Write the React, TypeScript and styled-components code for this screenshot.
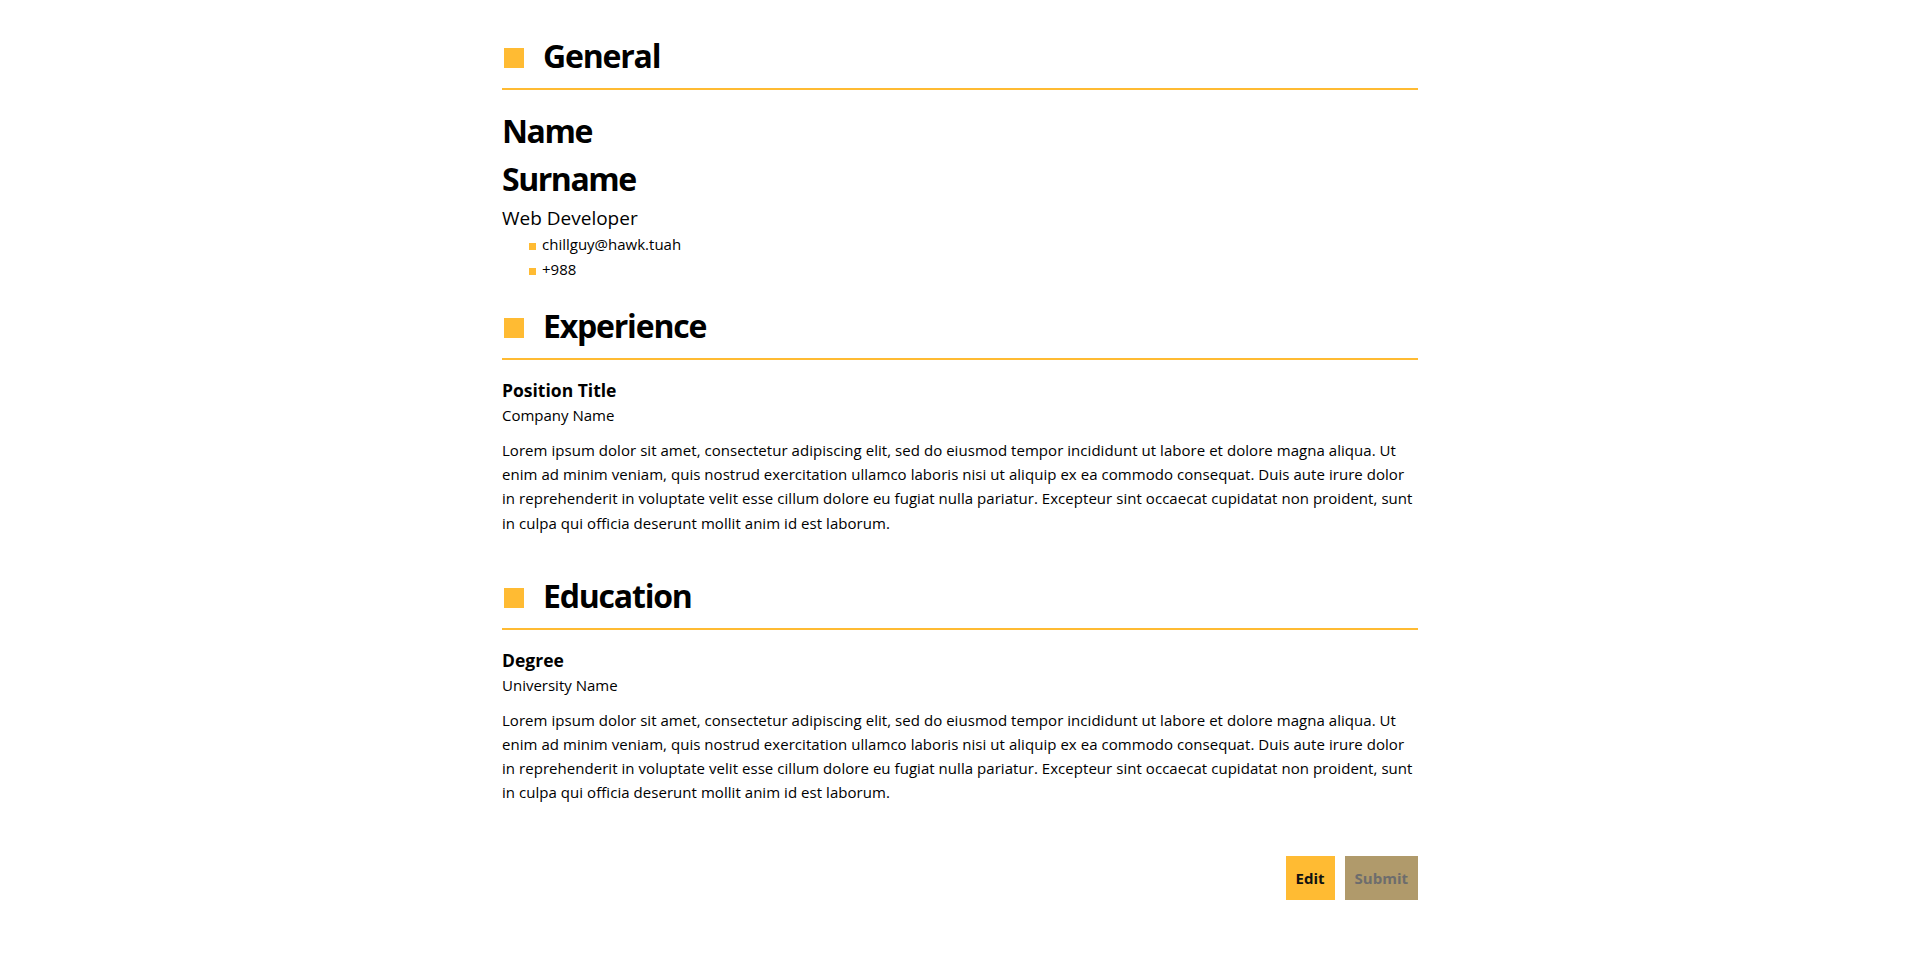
import React from "react";
import styled, { createGlobalStyle } from "styled-components";

const ACCENT = "#FFBB33";

const GlobalStyle = createGlobalStyle`
  html, body {
    margin: 0;
    padding: 0;
    background: #ffffff;
  }
  body {
    font-family: "Open Sans", "Noto Sans", Arial, sans-serif;
    color: #000000;
  }
  * { box-sizing: border-box; }
`;

const Page = styled.main`
  width: 916px;
  margin: 0 auto;
  padding: 36px 0 40px;
  display: flex;
  flex-direction: column;
`;

const Section = styled.section<{ $spaceTop?: number }>`
  display: flex;
  flex-direction: column;
  margin-top: ${(p) => p.$spaceTop ?? 0}px;
`;

const SectionHeader = styled.h2`
  margin: 0;
  display: flex;
  align-items: baseline;
  gap: 19px;
  font-size: 32px;
  line-height: 40px;
  font-weight: 700;
  letter-spacing: -1.2px;
  padding-bottom: 12px;
  border-bottom: 2px solid ${ACCENT};
`;

const Marker = styled.span`
  display: inline-block;
  width: 20px;
  height: 20px;
  margin-left: 2px;
  background: ${ACCENT};
  flex: none;
`;

const NameLine = styled.h1<{ $first?: boolean }>`
  margin: ${(p) => (p.$first ? "17px" : "0")} 0 0;
  font-size: 32px;
  line-height: 48px;
  font-weight: 700;
  letter-spacing: -1.45px;
`;

const Role = styled.div`
  margin-top: 2px;
  font-size: 19px;
  line-height: 26px;
`;

const ContactList = styled.ul`
  list-style: none;
  margin: 1px 0 0;
  padding: 0 0 0 27px;
  display: flex;
  flex-direction: column;
`;

const ContactItem = styled.li`
  display: flex;
  align-items: baseline;
  gap: 6px;
  font-size: 15px;
  line-height: 25px;
`;

const Bullet = styled.span`
  display: inline-block;
  width: 7px;
  height: 7px;
  background: ${ACCENT};
  flex: none;
`;

const EntryTitle = styled.h3`
  margin: 18px 0 0;
  font-size: 17.5px;
  line-height: 24px;
  font-weight: 700;
`;

const EntrySub = styled.div`
  font-size: 15px;
  line-height: 27px;
`;

const EntryText = styled.p`
  margin: 8.6px 0 0;
  font-size: 15px;
  line-height: 24.33px;
  letter-spacing: 0.045px;
`;

const Actions = styled.div`
  display: flex;
  justify-content: flex-end;
  gap: 10px;
  margin-top: 51px;
`;

const Button = styled.button<{ $variant: "primary" | "muted" }>`
  height: 44px;
  padding: 0 10px;
  border: none;
  border-radius: 0;
  font-family: inherit;
  font-size: 15px;
  font-weight: 700;
  cursor: pointer;
  background: ${(p) => (p.$variant === "primary" ? ACCENT : "#B09A6B")};
  color: ${(p) => (p.$variant === "primary" ? "#111111" : "#6d6d6d")};
`;

const LOREM =
  "Lorem ipsum dolor sit amet, consectetur adipiscing elit, sed do eiusmod tempor incididunt ut labore et dolore magna aliqua. Ut enim ad minim veniam, quis nostrud exercitation ullamco laboris nisi ut aliquip ex ea commodo consequat. Duis aute irure dolor in reprehenderit in voluptate velit esse cillum dolore eu fugiat nulla pariatur. Excepteur sint occaecat cupidatat non proident, sunt in culpa qui officia deserunt mollit anim id est laborum.";

export default function App() {
  return (
    <>
      <GlobalStyle />
      <Page>
        <Section>
          <SectionHeader>
            <Marker />
            General
          </SectionHeader>
          <NameLine $first>Name</NameLine>
          <NameLine>Surname</NameLine>
          <Role>Web Developer</Role>
          <ContactList>
            <ContactItem>
              <Bullet />
              chillguy@hawk.tuah
            </ContactItem>
            <ContactItem>
              <Bullet />
              +988
            </ContactItem>
          </ContactList>
        </Section>

        <Section $spaceTop={24}>
          <SectionHeader>
            <Marker />
            Experience
          </SectionHeader>
          <EntryTitle>Position Title</EntryTitle>
          <EntrySub>Company Name</EntrySub>
          <EntryText>{LOREM}</EntryText>
        </Section>

        <Section $spaceTop={41}>
          <SectionHeader>
            <Marker />
            Education
          </SectionHeader>
          <EntryTitle>Degree</EntryTitle>
          <EntrySub>University Name</EntrySub>
          <EntryText>{LOREM}</EntryText>
        </Section>

        <Actions>
          <Button $variant="primary">Edit</Button>
          <Button $variant="muted" disabled>
            Submit
          </Button>
        </Actions>
      </Page>
    </>
  );
}
